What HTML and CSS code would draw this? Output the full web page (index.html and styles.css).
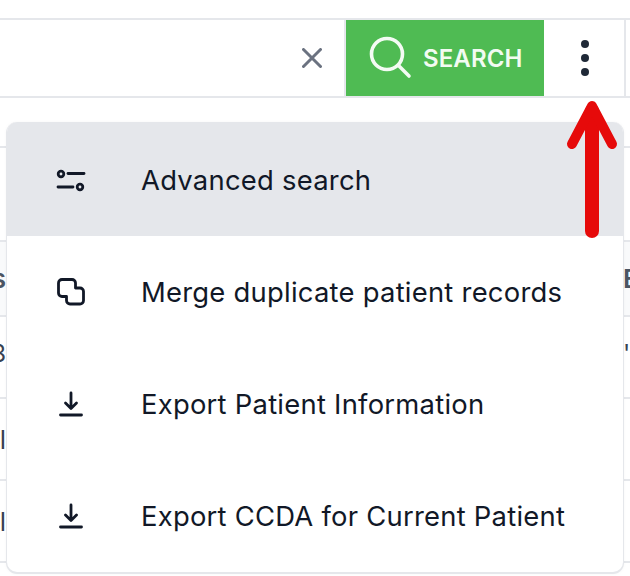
FILE: index.html
```html
<!DOCTYPE html>
<html lang="en">
<head>
    <meta charset="UTF-8">
    <meta name="viewport" content="width=device-width, initial-scale=1.0">
    <title>Patient search</title>
    <link rel="stylesheet" href="styles.css">
</head>
<body>
    <div class="page">
        <div class="search-bar">
            <div class="search-input">
                <svg class="clear-icon" viewBox="0 0 20 20" width="20" height="20">
                    <path d="M1.5 1.5 L18.5 18.5 M18.5 1.5 L1.5 18.5"/>
                </svg>
            </div>
            <button class="search-button">
                <svg viewBox="0 0 46 46" width="46" height="46">
                    <circle cx="19" cy="19" r="15.5"/>
                    <path d="M30.5 30.5 L41 41"/>
                </svg>
                <span>SEARCH</span>
            </button>
            <div class="more-cell">
                <span class="dot"></span>
                <span class="dot"></span>
                <span class="dot"></span>
            </div>
            <div class="bar-end"></div>
        </div>

        <div class="table">
            <div class="row row-top"></div>
            <div class="row row-blank"></div>
            <div class="row row-head"><span class="cut-left">s</span><span class="cut-right">E</span></div>
            <div class="row"><span class="cut-left small">8</span><span class="cut-right small">'/</span></div>
            <div class="row"><span class="cut-left">l</span></div>
            <div class="row"><span class="cut-left">l</span></div>
        </div>

        <div class="menu">
            <div class="menu-item active">
                <svg class="menu-icon" viewBox="0 0 32 32" width="32" height="32">
                    <circle cx="6" cy="10" r="2.8"/>
                    <path d="M13 9.5 H29"/>
                    <path d="M3 23 H18"/>
                    <circle cx="25" cy="23" r="2.8"/>
                </svg>
                <span>Advanced search</span>
            </div>
            <div class="menu-item">
                <svg class="menu-icon" viewBox="0 0 32 32" width="32" height="32">
                    <path d="M7 3.5 H17 a3.5 3.5 0 0 1 3.5 3.5 v5 H25 a3.5 3.5 0 0 1 3.5 3.5 v9 a3.5 3.5 0 0 1 -3.5 3.5 H15 a3.5 3.5 0 0 1 -3.5 -3.5 v-4 H7 a3.5 3.5 0 0 1 -3.5 -3.5 V7 a3.5 3.5 0 0 1 3.5 -3.5 z"/>
                </svg>
                <span>Merge duplicate patient records</span>
            </div>
            <div class="menu-item">
                <svg class="menu-icon" viewBox="0 0 32 32" width="32" height="32">
                    <path d="M5.5 27 H26.5"/>
                    <path d="M16 5 V20.5 M10.5 15 L16 20.5 L21.5 15"/>
                </svg>
                <span>Export Patient Information</span>
            </div>
            <div class="menu-item">
                <svg class="menu-icon" viewBox="0 0 32 32" width="32" height="32">
                    <path d="M5.5 27 H26.5"/>
                    <path d="M16 5 V20.5 M10.5 15 L16 20.5 L21.5 15"/>
                </svg>
                <span>Export CCDA for Current Patient</span>
            </div>
        </div>

        <svg class="arrow" viewBox="0 0 60 150" width="60" height="150">
            <path d="M30 14 V134"/>
            <path class="arrow-head" d="M10 47 L30 9 L50 47"/>
        </svg>
    </div>
</body>
</html>
```

FILE: styles.css
```css
html, body {
    margin: 0;
    height: 100%;
    background: #fff;
    overflow: hidden;
}
.page {
    position: relative;
    width: 630px;
    height: 576px;
    overflow: hidden;
    padding-top: 18px;
    box-sizing: border-box;
    font-family: Inter, "Liberation Sans", sans-serif;
}
.search-bar {
    display: flex;
    height: 80px;
    box-sizing: border-box;
    border-top: 2px solid #e5e7eb;
    border-bottom: 2px solid #e5e7eb;
}
.search-input {
    flex: 1;
    display: flex;
    justify-content: flex-end;
    align-items: center;
    padding-right: 22px;
    border-right: 2px solid #e5e7eb;
}
.clear-icon path {
    fill: none;
    stroke: #6b7280;
    stroke-width: 3;
    stroke-linecap: round;
}
.search-button {
    width: 198px;
    display: flex;
    align-items: center;
    gap: 9px;
    padding: 0 0 0 22px;
    border: none;
    background: #4fbb53;
    color: #f2fbf2;
    font-family: inherit;
    font-size: 24px;
    font-weight: 600;
    letter-spacing: 0.1px;
}
.search-button svg {
    flex: none;
}
.search-button svg * {
    fill: none;
    stroke: #f4fbf4;
    stroke-width: 3.6;
    stroke-linecap: round;
}
.more-cell {
    width: 78px;
    padding-left: 2px;
    display: flex;
    flex-direction: column;
    align-items: center;
    justify-content: center;
    gap: 6px;
    border-right: 2px solid #e5e7eb;
}
.dot {
    width: 8px;
    height: 8px;
    border-radius: 50%;
    background: #1f2937;
}
.bar-end {
    width: 4px;
}
.table {
    color: #374151;
    font-size: 26px;
}
.row {
    display: flex;
    justify-content: space-between;
    align-items: center;
    height: 82px;
    box-sizing: border-box;
    border-bottom: 2px solid #e5e7eb;
    overflow: hidden;
}
.row-top {
    height: 50px;
}
.row-blank {
    height: 94px;
}
.row-head {
    height: 75px;
    background: #f9fafb;
    color: #4b5563;
    font-weight: 600;
}
.small {
    font-size: 24px;
    margin-bottom: 8px;
}
.cut-left {
    width: 6px;
    display: flex;
    justify-content: flex-end;
    overflow: hidden;
}
.cut-right {
    margin-left: auto;
    width: 7px;
    overflow: hidden;
}
.menu {
    position: absolute;
    left: 7px;
    top: 122px;
    width: 616px;
    height: 450px;
    background: #fff;
    border-radius: 10px;
    overflow: hidden;
    box-shadow: 0 1px 0 1px #e5e7eb, 0 1px 4px rgba(0, 0, 0, 0.06);
}
.menu-item {
    display: flex;
    align-items: center;
    height: 112px;
    padding-left: 48px;
    gap: 54px;
    color: #111827;
    font-size: 27.4px;
    letter-spacing: 0.25px;
}
.menu-item.active {
    height: 114px;
    padding-top: 2px;
    box-sizing: border-box;
    background: #e5e7eb;
}
.menu-icon {
    flex: none;
}
.menu-icon * {
    fill: none;
    stroke: #111827;
    stroke-width: 2.8;
    stroke-linecap: round;
    stroke-linejoin: round;
}
.arrow {
    position: absolute;
    left: 562px;
    top: 97px;
}
.arrow path {
    fill: none;
    stroke: #e60a0a;
    stroke-width: 14;
    stroke-linecap: round;
    stroke-linejoin: round;
}
.arrow .arrow-head {
    stroke-width: 10;
}
```
